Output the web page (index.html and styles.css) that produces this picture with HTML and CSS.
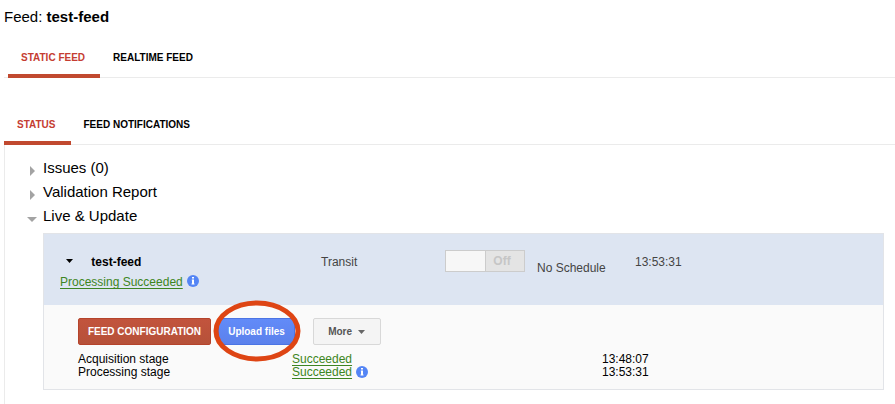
FILE: index.html
```html
<!DOCTYPE html>
<html lang="en">
<head>
  <meta charset="UTF-8" />
  <meta name="viewport" content="width=device-width, initial-scale=1" />
  <title>Feed: test-feed</title>
  <link rel="stylesheet" href="styles.css">
</head>
<body>
  <h1>Feed: <b>test-feed</b></h1>

  <nav class="tabs main-tabs">
    <a class="tab active" href="#static">STATIC FEED</a>
    <a class="tab" href="#realtime">REALTIME FEED</a>
  </nav>

  <nav class="tabs sub-tabs">
    <a class="tab active" href="#status">STATUS</a>
    <a class="tab" href="#notifications">FEED NOTIFICATIONS</a>
  </nav>

  <main class="panel">
    <details>
      <summary><svg class="arrow" viewBox="0 0 10 10"><path d="M3 0l5 5-5 5z"/></svg>Issues (0)</summary>
    </details>
    <details>
      <summary><svg class="arrow" viewBox="0 0 10 10"><path d="M3 0l5 5-5 5z"/></svg>Validation Report</summary>
    </details>
    <details open>
      <summary><svg class="arrow" viewBox="0 0 10 10"><path d="M0 3h10l-5 5z"/></svg>Live &amp; Update</summary>

      <section class="card">
        <div class="feed-row">
          <div class="feed-name">
            <button class="expand" aria-label="Collapse feed"><svg viewBox="0 0 8 4"><path d="M0 0h7L3.500 4z"/></svg></button>
            <b>test-feed</b>
            <div class="feed-status">
              <a class="result" href="#log">Processing Succeeded</a>
              <svg class="info" viewBox="0 0 12 12"><circle cx="6" cy="6" r="6"/><path d="M5 2h2v1.600H5zM4.800 4.500H7v4h.5v1h-3v-1H5v-3h-.2z"/></svg>
            </div>
          </div>
          <span>Transit</span>
          <label class="toggle">
            <input type="checkbox" disabled aria-label="Feed enabled">
            <span class="toggle-off">Off</span>
          </label>
          <span class="schedule">No Schedule</span>
          <span>13:53:31</span>
        </div>

        <div class="feed-body">
          <div class="buttons">
            <button class="btn btn-red">FEED CONFIGURATION</button>
            <div class="highlight">
              <button class="btn btn-blue">Upload files</button>
              <svg class="ring" viewBox="0 0 88 62"><ellipse cx="44" cy="31" rx="41" ry="28"/></svg>
            </div>
            <button class="btn btn-grey">More <svg viewBox="0 0 8 4"><path d="M0 0h7L3.500 4z"/></svg></button>
          </div>
          <table class="stages">
            <tr>
              <td class="stage">Acquisition stage</td>
              <td class="outcome"><a class="result" href="#acquisition">Succeeded</a></td>
              <td>13:48:07</td>
            </tr>
            <tr>
              <td class="stage">Processing stage</td>
              <td class="outcome">
                <a class="result" href="#processing">Succeeded</a>
                <svg class="info" viewBox="0 0 12 12"><circle cx="6" cy="6" r="6"/><path d="M5 2h2v1.600H5zM4.800 4.500H7v4h.5v1h-3v-1H5v-3h-.2z"/></svg>
              </td>
              <td>13:53:31</td>
            </tr>
          </table>
        </div>
      </section>
    </details>
  </main>
</body>
</html>
```

FILE: styles.css
```css
* {
  box-sizing: border-box;
}

body {
  margin: 0;
  padding-left: 4px;
  font-family: "Liberation Sans", Arial, Helvetica, sans-serif;
  font-size: 12px;
  color: #000;
  background: #fff;
}

h1 {
  margin: 0;
  padding-top: 7px;
  font-size: 15px;
  font-weight: normal;
  line-height: 20px;
}

/* tabs */
.tabs {
  display: flex;
  border-bottom: 1px solid #ebebeb;
}

.tab {
  padding: 2px 15px 0 13px;
  margin-bottom: -1px;
  border-bottom: 4px solid transparent;
  font-size: 10px;
  font-weight: bold;
  line-height: 32px;
  color: #000;
  text-decoration: none;
}

.tab.active {
  color: #c53d31;
  border-bottom-color: #c1492f;
}

.main-tabs {
  margin-top: 13px;
  padding-left: 4px;
}

.sub-tabs {
  margin-top: 29px;
}

/* collapsible sections */
.panel {
  padding: 10px 11px 14px 22px;
  border-left: 1px solid #ebebeb;
}

summary {
  display: flex;
  align-items: center;
  gap: 6px;
  height: 24px;
  font-size: 15px;
  list-style: none;
  cursor: pointer;
}

.arrow {
  width: 10px;
  height: 10px;
  margin-top: 8px;
  fill: #a3a3a3;
}

.card {
  margin: 6px 0 0 16px;
  border: 1px solid #e2e4e8;
  background: #fafafa;
}

.feed-row {
  display: grid;
  grid-template-columns: 261px 124px 92px 98px 1fr;
  align-items: start;
  padding: 16px 16px 15px;
  line-height: 24px;
  color: #444;
  background: #dde5f2;
}

.feed-name b {
  margin-left: 11px;
  color: #000;
}

.expand {
  padding: 0 3px 0 6px;
  border: 0;
  background: none;
  cursor: pointer;
}

.expand svg {
  display: block;
  width: 8px;
  height: 4px;
  margin-bottom: 3px;
}

.feed-status {
  line-height: 16px;
}

.result {
  color: #3d8522;
  text-underline-offset: 2px;
}

.info {
  width: 12px;
  height: 12px;
  margin-left: 1px;
  vertical-align: -1px;
}

.info circle {
  fill: #5485f5;
}

.info path {
  fill: #fff;
}

.toggle {
  display: flex;
  width: 80px;
  height: 22px;
  border: 1px solid #ccc;
  background: #f7f7f7;
}

.toggle input {
  appearance: none;
  width: 50%;
  margin: 0;
}

.toggle-off {
  width: 50%;
  padding-right: 6px;
  border-left: 1px solid #ccc;
  font-weight: bold;
  line-height: 20px;
  text-align: center;
  color: #c6c6c6;
  background: #e4e4e4;
}

.schedule {
  line-height: 36px;
}

/* expanded feed */
.feed-body {
  padding: 13px 34px 10px;
}

.buttons {
  display: flex;
  gap: 7px;
}

.btn {
  height: 27px;
  padding: 0 8px;
  border: 1px solid;
  border-radius: 2px;
  font-family: inherit;
  font-size: 10px;
  font-weight: bold;
  cursor: pointer;
}

.btn-red {
  width: 133px;
  color: #fff;
  background: linear-gradient(#c2543d, #b65139);
  border-color: #b5432b;
}

.btn-blue {
  width: 77px;
  color: #fff;
  background: linear-gradient(#628bf8, #5b81ec);
  border-color: #4b74e4;
}

.btn-grey {
  width: 68px;
  margin-left: 11px;
  color: #555;
  background: #f4f4f4;
  border-color: #d8d8d8;
}

.btn-grey svg {
  width: 8px;
  height: 4px;
  margin-left: 3px;
  vertical-align: 1px;
  fill: #666;
}

.highlight {
  position: relative;
}

/* ring drawn over the upload button */
.ring {
  position: absolute;
  top: -18px;
  left: -5px;
  width: 88px;
  height: 62px;
  pointer-events: none;
}

.ring ellipse {
  fill: none;
  stroke: #de4514;
  stroke-width: 5;
}

.stages {
  width: 100%;
  margin-top: 8px;
  border-collapse: collapse;
  line-height: 13px;
}

.stages td {
  padding: 0;
  height: 13px;
}

.stages .stage {
  width: 214px;
}

.stages .outcome {
  width: 310px;
}

.stages .info {
  margin-top: -2px;
  vertical-align: middle;
}
```
